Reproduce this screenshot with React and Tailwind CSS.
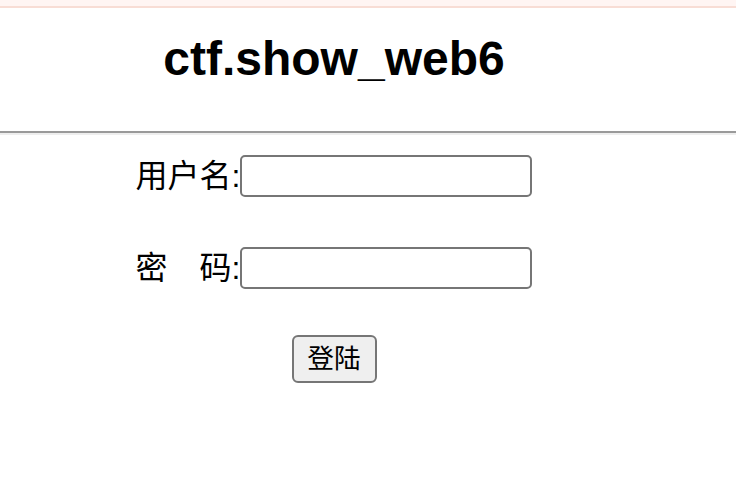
import React from 'react';

const font = { fontFamily: '"Liberation Sans", "Noto Sans CJK SC", sans-serif' };

const Field = ({ label, type }) => (
    <div className="flex items-center justify-center">
        <span className="text-[32px] leading-none text-black">{label}:</span>
        <input
            type={type}
            className="w-[292px] h-[42px] border-2 border-[#767676] rounded-[5px] bg-white outline-none"
        />
    </div>
);

export default function App() {
    return (
        <div className="min-h-[494px] bg-white text-black" style={font}>
            <div className="h-[8px] bg-[#fff5f3] border-b-2 border-[#f8ddd5]"></div>
            <div className="w-[668px] h-[123px] pt-[23px] flex justify-center">
                <h2 className="text-[48px] font-bold leading-[55px]">ctf.show_web6</h2>
            </div>
            <div className="h-[4px] border-t-2 border-[#9a9a9a] border-b-2 border-b-[#eeeeee]"></div>
            <form className="w-[668px] flex flex-col items-center pt-[20px]" onSubmit={(e) => e.preventDefault()}>
                <Field label="用户名" type="text" />
                <div className="h-[50px]"></div>
                <Field label="密　码" type="password" />
                <button
                    type="submit"
                    className="mt-[46px] w-[85px] h-[48px] border-2 border-[#767676] rounded-[6px] bg-[#efefef] text-[26.67px] leading-none text-black"
                >
                    登陆
                </button>
            </form>
        </div>
    );
}
